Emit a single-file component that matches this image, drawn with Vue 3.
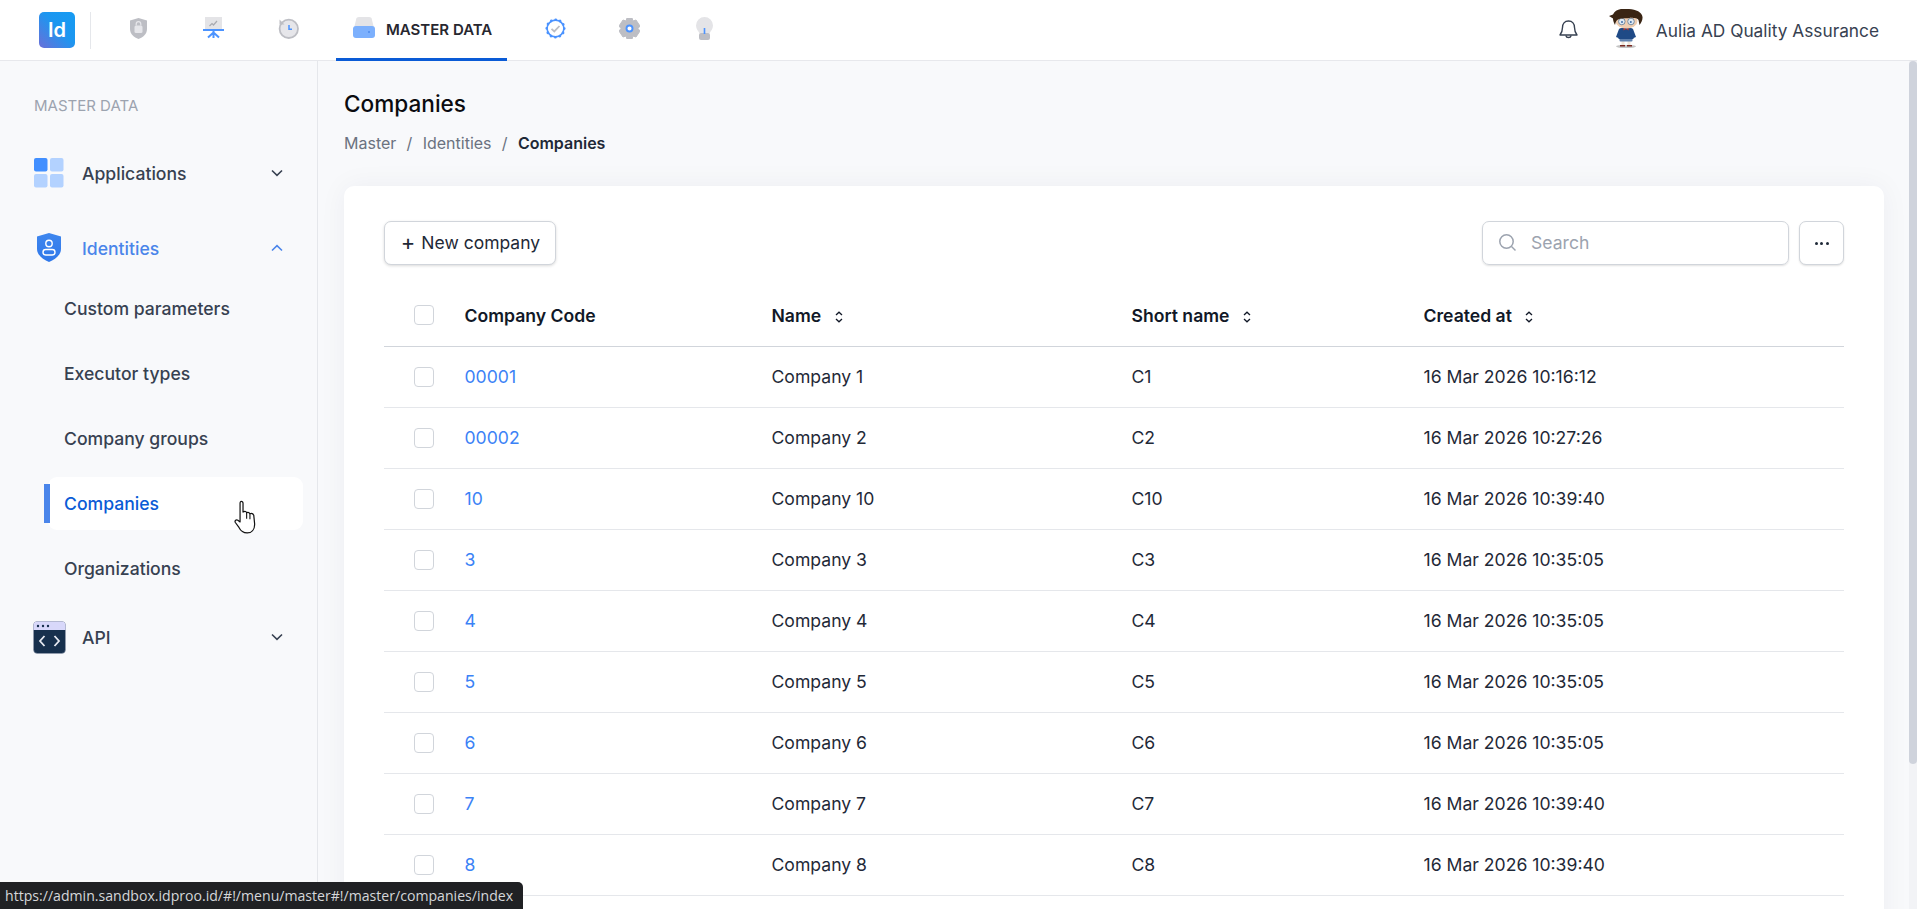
<template>
  <div class="page">
    <header class="topbar">
      <div class="logo">Id</div>
      <div class="logo-sep"></div>
      <nav class="tabs">
        <a class="tab tab-shield">
          <svg width="17" height="21" viewBox="0 0 17 21">
            <path d="M8.5 0 L17 2.5 V11 C17 16 13 19.5 8.5 21 C4 19.5 0 16 0 11 V2.5 Z" fill="#bdbec4" />
            <rect x="4.5" y="7.5" width="8" height="7.5" rx="1.5" fill="#e6e6ea" />
            <path d="M6.2 7.5 V6 a2.3 2.3 0 0 1 4.6 0 V7.5" fill="none" stroke="#e6e6ea" stroke-width="1.2" />
          </svg>
        </a>
        <a class="tab tab-board">
          <svg width="21" height="22" viewBox="0 0 21 22">
            <rect x="2" y="0" width="17" height="12" fill="#e4e4e7" />
            <path d="M6.5 9 L9 6.5 L10.5 8 L14 4" fill="none" stroke="#a9aab0" stroke-width="1.2" />
            <rect x="0" y="12" width="21" height="2" fill="#4b93ff" />
            <path d="M10.5 14 V21 M10.5 15.5 L5 20.5 M10.5 15.5 L16 20.5" fill="none" stroke="#4b93ff" stroke-width="2" />
          </svg>
        </a>
        <a class="tab tab-history">
          <svg width="21" height="21" viewBox="0 0 21 21">
            <circle cx="10.8" cy="10.8" r="9.2" fill="#e6e6ea" stroke="#bdbec4" stroke-width="1.8" />
            <path d="M1.5 1.5 V6.5 H6.5 Z" fill="#bdbec4" />
            <path d="M11 7 V11.3 H14" fill="none" stroke="#4b93ff" stroke-width="1.5" />
          </svg>
        </a>
        <a class="tab tab-active">
          <svg width="22" height="21" viewBox="0 0 22 21">
            <path d="M3 3 a3 3 0 0 1 3 -3 H16 a3 3 0 0 1 3 3 L21 11 H1 Z" fill="#e4e4e7" />
            <rect x="0" y="9" width="22" height="12" rx="3" fill="#7cb0fd" />
            <circle cx="16" cy="15" r="0.8" fill="#2b6fe0" />
          </svg>
          <span>MASTER DATA</span>
        </a>
        <a class="tab tab-verified">
          <svg width="21" height="21" viewBox="0 0 21 21">
            <circle cx="10.5" cy="10.5" r="8.4" fill="#fff" stroke="#4b93ff" stroke-width="1.6" />
            <circle cx="10.5" cy="10.5" r="8.8" fill="none" stroke="#4b93ff" stroke-width="2.6" stroke-linecap="round" stroke-dasharray="0.1 4.5" />
            <path d="M6.5 10.8 L9.3 13.4 L14.5 8" fill="none" stroke="#bdbec4" stroke-width="1.8" />
          </svg>
        </a>
        <a class="tab tab-gear">
          <svg width="21" height="21" viewBox="0 0 21 21">
            <path d="M8 0 H13 L14 3 L17 2 L21 8 L19 10.5 L21 13 L17 19 L14 18 L13 21 H8 L7 18 L4 19 L0 13 L2 10.5 L0 8 L4 2 L7 3 Z" fill="#bdbec4" stroke="#bdbec4" stroke-linejoin="round" />
            <circle cx="10.5" cy="10.5" r="3" fill="#fff" stroke="#4b93ff" stroke-width="1.9" />
          </svg>
        </a>
        <a class="tab tab-bulb">
          <svg width="17" height="23" viewBox="0 0 17 23">
            <path d="M8.5 0 a8.5 8.5 0 0 1 8.5 8.5 c0 3.5 -2.5 5.5 -3.5 8 H3.5 C2.5 14 0 12 0 8.5 A8.5 8.5 0 0 1 8.5 0 Z" fill="#e4e4e7" />
            <rect x="3" y="16" width="11" height="7" rx="2" fill="#bdbec4" />
            <rect x="7.7" y="11" width="1.6" height="6" fill="#4b93ff" />
          </svg>
        </a>
      </nav>
      <div class="user-area">
        <svg class="bell" width="19" height="21" viewBox="0 0 19 21" fill="none" stroke="#374151" stroke-width="1.4" stroke-linejoin="round">
          <path d="M9.5 1 C5.5 1 3.5 4 3.5 7.5 C3.5 11 2.5 13 1 15 H18 C16.5 13 15.5 11 15.5 7.5 C15.5 4 13.5 1 9.5 1 Z" />
          <path d="M6.8 15.5 a2.8 2.8 0 0 0 5.4 0" />
        </svg>
        <svg class="avatar" width="36" height="40" viewBox="0 0 36 40">
          <ellipse cx="17" cy="37.5" rx="10" ry="1.6" fill="#c4c4c4" />
          <rect x="12.5" y="31" width="3" height="5.5" fill="#efe6da" />
          <rect x="18.5" y="31" width="3" height="5.5" fill="#efe6da" />
          <rect x="11" y="36" width="5" height="1.5" fill="#7a2a22" />
          <rect x="18" y="36" width="5" height="1.5" fill="#7a2a22" />
          <rect x="10.5" y="27.5" width="13" height="5" rx="1" fill="#5f80ad" />
          <path d="M10 20 C12 18 22 18 24 20 L27 28 L24.5 29 V30 H9.5 V29 L7 28 Z" fill="#1f4a86" />
          <path d="M14.5 18.5 L17 20 L19.5 18.5 V21.5 L17 20 L14.5 21.5 Z" fill="#c0392b" />
          <ellipse cx="17.5" cy="12" rx="11" ry="7.5" fill="#efcdb0" />
          <circle cx="12.8" cy="12.5" r="3.3" fill="#dfe9f2" stroke="#5f7892" stroke-width="0.8" />
          <circle cx="22" cy="12.5" r="3.3" fill="#dfe9f2" stroke="#5f7892" stroke-width="0.8" />
          <circle cx="13" cy="13" r="1" fill="#3f6ea8" />
          <circle cx="21.8" cy="13" r="1" fill="#3f6ea8" />
          <path d="M0 7 L4 5.5 C6 0 14 -1 20 0 C27 0.5 33 3 33.5 8 C33.8 11 32 14 30.5 16 L29.5 11 C27 8 25 10 22 8.5 C18 10 12 8.5 9 10.5 C7.5 11 6.5 13 6 16 C4.5 13 4 11 4 9.5 Z" fill="#3a2514" />
        </svg>
        <span class="user-name">Aulia AD Quality Assurance</span>
      </div>
    </header>

    <div class="body-row">
      <aside class="sidebar">
        <div class="side-title">MASTER DATA</div>

        <div class="side-item side-first">
          <svg class="side-icon" width="30" height="30" viewBox="0 0 30 30">
            <rect x="0" y="0" width="13.5" height="13.5" rx="2" fill="#418fff" />
            <rect x="16" y="0" width="13.5" height="13.5" rx="2" fill="#b3d2ff" />
            <rect x="0" y="16" width="13.5" height="13.5" rx="2" fill="#b3d2ff" />
            <rect x="16" y="16" width="13.5" height="13.5" rx="2" fill="#b3d2ff" />
          </svg>
          <span class="side-label">Applications</span>
          <svg class="chev" width="14" height="8" viewBox="0 0 14 8" fill="none" stroke="#374151" stroke-width="1.6"><path d="M2 1.5 L7 6.3 L12 1.5" /></svg>
        </div>

        <div class="side-item side-open">
          <svg class="side-icon" width="30" height="30" viewBox="0 0 30 30">
            <defs>
              <linearGradient id="shieldFill" x1="0" y1="0" x2="0" y2="1">
                <stop offset="0" stop-color="#3e86ee" />
                <stop offset="1" stop-color="#2f78ea" />
              </linearGradient>
            </defs>
            <path d="M15 0 L27 3.5 V16 C27 22 21 26.5 15 29 C9 26.5 3 22 3 16 V3.5 Z" fill="url(#shieldFill)" />
            <circle cx="15" cy="10.5" r="3.2" fill="none" stroke="#fff" stroke-width="1.4" />
            <rect x="9" y="16.5" width="12" height="5.5" rx="2.7" fill="none" stroke="#fff" stroke-width="1.4" />
          </svg>
          <span class="side-label">Identities</span>
          <svg class="chev" width="14" height="8" viewBox="0 0 14 8" fill="none" stroke="#4a85ea" stroke-width="1.6"><path d="M2 6.5 L7 1.7 L12 6.5" /></svg>
        </div>

        <div class="sub-list">
          <div
            v-for="item in subItems"
            :key="item"
            class="sub-item"
            :class="{ active: item === 'Companies' }"
          >
            {{ item }}
          </div>
        </div>

        <div class="side-item side-api">
          <svg class="side-icon api-icon" width="33" height="33" viewBox="0 0 33 33">
            <rect x="0.5" y="0.5" width="32" height="32" rx="4" fill="#17304d" stroke="#9aa3b5" stroke-width="0.5" />
            <path d="M0.5 9 V4.5 a4 4 0 0 1 4 -4 H28.5 a4 4 0 0 1 4 4 V9 Z" fill="#d8d8fa" />
            <circle cx="5" cy="5" r="1.2" fill="#17304d" />
            <circle cx="10" cy="5" r="1.2" fill="#17304d" />
            <circle cx="15" cy="5" r="1.2" fill="#17304d" />
            <path d="M11.5 15 L7 20 L11.5 25 M21.5 15 L26 20 L21.5 25" fill="none" stroke="#e7eaf2" stroke-width="1.8" />
          </svg>
          <span class="side-label">API</span>
          <svg class="chev" width="14" height="8" viewBox="0 0 14 8" fill="none" stroke="#374151" stroke-width="1.6"><path d="M2 1.5 L7 6.3 L12 1.5" /></svg>
        </div>
      </aside>

      <main class="content">
        <h1 class="page-title">Companies</h1>
        <div class="crumbs">
          <span>Master</span><i>/</i><span>Identities</span><i>/</i><b>Companies</b>
        </div>

        <section class="card">
          <div class="toolbar">
            <button class="btn-new"><span class="plus">+</span> New company</button>
            <div class="search-box">
              <svg width="19" height="19" viewBox="0 0 19 19" fill="none" stroke="#9ca3af" stroke-width="1.5"><circle cx="8.5" cy="8.5" r="6.7" /><path d="M13.5 13.5 L17.5 17.5" /></svg>
              <span>Search</span>
            </div>
            <button class="btn-more" aria-label="More"><span></span><span></span><span></span></button>
          </div>

          <div class="table">
            <div class="tr th">
              <div class="td-check"><span class="check"></span></div>
              <div class="td-code">Company Code</div>
              <div class="td-name">Name <svg class="sort" width="8" height="12" viewBox="0 0 8 12" fill="none" stroke="#111827" stroke-width="1.3"><path d="M1 4 L4 1.2 L7 4 M1 8 L4 10.8 L7 8" /></svg></div>
              <div class="td-short">Short name <svg class="sort" width="8" height="12" viewBox="0 0 8 12" fill="none" stroke="#111827" stroke-width="1.3"><path d="M1 4 L4 1.2 L7 4 M1 8 L4 10.8 L7 8" /></svg></div>
              <div class="td-date">Created at <svg class="sort" width="8" height="12" viewBox="0 0 8 12" fill="none" stroke="#111827" stroke-width="1.3"><path d="M1 4 L4 1.2 L7 4 M1 8 L4 10.8 L7 8" /></svg></div>
            </div>
            <div v-for="row in rows" :key="row.code" class="tr">
              <div class="td-check"><span class="check"></span></div>
              <div class="td-code"><a>{{ row.code }}</a></div>
              <div class="td-name">{{ row.name }}</div>
              <div class="td-short">{{ row.short }}</div>
              <div class="td-date">{{ row.created }}</div>
            </div>
          </div>
        </section>
      </main>

      <div class="scroll-track"><div class="scroll-thumb"></div></div>
    </div>

    <!-- hover cursor -->
    <svg class="cursor" width="22" height="34" viewBox="0 0 20 31">
      <path d="M6 1.5 C7.3 1 8.2 1.8 8.2 3 V11 C10 10 11 10.5 11.5 11.5 C13 10.8 14 11.5 14.5 12.5 C16 12 17.5 12.8 18 14 L18.8 22 C18.8 27 16 30 12 30 C8 30 6 28 4.5 25 L1.2 20.5 C0.3 19 2 17.4 3.5 18.5 L5.5 20 V3 C5.5 2.2 5.5 1.8 6 1.5 Z" fill="#fff" stroke="#111" stroke-width="1.1" stroke-linejoin="round" />
      <path d="M11.5 11.5 V17 M14.5 12.5 V17.5" stroke="#111" stroke-width="1" />
    </svg>

    <div class="status-url">https://admin.sandbox.idproo.id/#!/menu/master#!/master/companies/index</div>
  </div>
</template>

<script setup>
const subItems = ['Custom parameters', 'Executor types', 'Company groups', 'Companies', 'Organizations']

const rows = [
  { code: '00001', name: 'Company 1', short: 'C1', created: '16 Mar 2026 10:16:12' },
  { code: '00002', name: 'Company 2', short: 'C2', created: '16 Mar 2026 10:27:26' },
  { code: '10', name: 'Company 10', short: 'C10', created: '16 Mar 2026 10:39:40' },
  { code: '3', name: 'Company 3', short: 'C3', created: '16 Mar 2026 10:35:05' },
  { code: '4', name: 'Company 4', short: 'C4', created: '16 Mar 2026 10:35:05' },
  { code: '5', name: 'Company 5', short: 'C5', created: '16 Mar 2026 10:35:05' },
  { code: '6', name: 'Company 6', short: 'C6', created: '16 Mar 2026 10:35:05' },
  { code: '7', name: 'Company 7', short: 'C7', created: '16 Mar 2026 10:39:40' },
  { code: '8', name: 'Company 8', short: 'C8', created: '16 Mar 2026 10:39:40' },
]
</script>

<style>
html, body {
  margin: 0;
  height: 100%;
  overflow: hidden;
}
</style>

<style scoped>
.page {
  position: relative;
  height: 909px;
  display: flex;
  flex-direction: column;
  overflow: hidden;
  font-family: Inter, "Liberation Sans", sans-serif;
  font-size: 17.6px;
  color: #1f2937;
  background: #f8f9fb;
}

.topbar {
  height: 60px;
  flex: none;
  display: flex;
  align-items: center;
  background: #fff;
  border-bottom: 1px solid #e7e8ec;
  padding-left: 39px;
}

.logo {
  width: 36px;
  height: 36px;
  border-radius: 5px;
  background: linear-gradient(45deg, #6a6fd8 0%, #1d96f0 55%, #159bf2 100%);
  color: #fff;
  font-size: 20px;
  font-weight: 600;
  display: flex;
  align-items: center;
  justify-content: center;
}

.logo-sep {
  width: 1px;
  height: 37px;
  background: #e5e7eb;
  margin-left: 15px;
}

.tabs {
  display: flex;
  height: 100%;
  align-items: stretch;
  margin-left: 39px;
}

.tab {
  display: flex;
  align-items: center;
  position: relative;
}

.tab svg {
  margin-top: -4px;
}

.tab-board { margin-left: 56px; }
.tab-history { margin-left: 54px; }

.tab-active {
  margin-left: 37px;
  padding: 0 15px 0 17px;
  gap: 11px;
  font-size: 15px;
  font-weight: 600;
  color: #27272f;
  height: 61px;
  box-sizing: border-box;
  border-bottom: 3px solid #0a5bd6;
}

.tab-verified { margin-left: 38px; }
.tab-gear { margin-left: 53px; }
.tab-bulb { margin-left: 56px; }

.user-area {
  margin-left: auto;
  display: flex;
  align-items: center;
  padding-right: 38px;
}

.bell { margin-right: 31px; }
.avatar { margin-right: 11px; margin-top: -2px; }

.user-name {
  font-size: 17.3px;
  color: #374151;
}

.body-row {
  flex: 1;
  min-height: 0;
  display: flex;
}

.sidebar {
  width: 318px;
  flex: none;
  box-sizing: border-box;
  border-right: 1px solid #e5e7eb;
  background: #f8f9fb;
  padding-top: 36px;
}

.side-title {
  font-size: 15px;
  line-height: 17px;
  color: #9ca3af;
  padding-left: 34px;
}

.side-item {
  display: flex;
  align-items: center;
  height: 60px;
  padding-left: 34px;
  position: relative;
  color: #374151;
}

.side-first { margin-top: 29px; }

.side-icon {
  flex: none;
  margin-right: 18px;
}

.api-icon { margin-left: -1px; margin-right: 16px; }

.side-label {
  flex: 1;
  font-weight: 500;
}

.side-open { color: #4a85ea; margin-top: 15px; }

.chev {
  margin-right: 33px;
}

.sub-list {
  margin-top: 4px;
  padding-left: 44px;
  padding-right: 14px;
}

.sub-item {
  height: 53px;
  margin-bottom: 12px;
  display: flex;
  align-items: center;
  padding-left: 20px;
  font-weight: 500;
  color: #374151;
  position: relative;
}

.sub-item.active {
  margin-left: 4px;
  padding-left: 16px;
  background: #fff;
  border-radius: 9px;
  color: #0a5bd6;
}

.sub-item.active::before {
  content: "";
  position: absolute;
  left: -4px;
  top: 7px;
  bottom: 7px;
  width: 6px;
  background: #4a85ea;
}

.side-api { margin-top: 2px; }

.content {
  flex: 1;
  min-width: 0;
  padding: 30px 25px 0 26px;
}

.page-title {
  margin: 0;
  font-size: 22.6px;
  line-height: 26px;
  font-weight: 500;
  color: #0b0b0f;
}

.crumbs {
  margin-top: 14px;
  font-size: 16px;
  line-height: 24px;
  color: #6b7280;
  display: flex;
}

.crumbs i {
  font-style: normal;
  margin: 0 10.3px;
}

.crumbs b {
  color: #1f2937;
  font-weight: 600;
}

.card {
  margin-top: 31px;
  background: #fff;
  border-radius: 10px;
  box-shadow: 0 0 28px rgba(30, 40, 70, 0.05);
  padding: 35px 40px 60px 39px;
}

.toolbar {
  display: flex;
  align-items: center;
}

.btn-new {
  height: 44px;
  width: 172px;
  margin-left: 1px;
  box-sizing: border-box;
  background: #fff;
  border: 1px solid #d1d5db;
  border-radius: 7px;
  box-shadow: 0 1px 3px rgba(0, 0, 0, 0.15);
  font: inherit;
  font-size: 17.5px;
  color: #1f2937;
  padding: 0 0 2px 1px;
}

.plus {
  font-size: 22px;
  line-height: 1;
  font-weight: 400;
  margin-right: 1px;
  vertical-align: -1px;
}

.search-box {
  margin-left: auto;
  width: 307px;
  height: 44px;
  box-sizing: border-box;
  border: 1px solid #d1d5db;
  border-radius: 7px;
  box-shadow: 0 1px 2px rgba(0, 0, 0, 0.12);
  display: flex;
  align-items: center;
  padding-left: 15px;
  padding-bottom: 1px;
  gap: 14px;
  color: #9ca3af;
}

.btn-more {
  margin-left: 10px;
  width: 45px;
  height: 44px;
  box-sizing: border-box;
  background: #fff;
  border: 1px solid #d1d5db;
  border-radius: 7px;
  box-shadow: 0 1px 2px rgba(0, 0, 0, 0.12);
  display: flex;
  align-items: center;
  justify-content: center;
  gap: 2.5px;
  padding: 0;
}

.btn-more span {
  width: 3px;
  height: 3px;
  border-radius: 50%;
  background: #1f2937;
}

.table {
  margin-top: 18px;
  margin-left: 1px;
}

.tr {
  display: grid;
  grid-template-columns: 80.5px 307px 360px 292px 1fr;
  align-items: center;
  height: 61px;
  padding-bottom: 1px;
  box-sizing: border-box;
  border-bottom: 1px solid #e5e7eb;
  color: #1f2937;
}

.th {
  height: 64px;
  padding-top: 1px;
  padding-bottom: 0;
  font-weight: 600;
  color: #111827;
  border-bottom-color: #d1d5db;
}

.td-check {
  padding-left: 30px;
  display: flex;
}

.check {
  width: 20px;
  height: 20px;
  box-sizing: border-box;
  border: 1px solid #d1d5db;
  border-radius: 4px;
  background: #fff;
}

.td-code a {
  color: #3b82f6;
}

.sort {
  margin-left: 9px;
  vertical-align: -1px;
}

.scroll-track {
  width: 8px;
  flex: none;
  background: #f2f3f6;
}

.scroll-thumb {
  height: 703px;
  background: #cfd3dc;
  border-radius: 4px;
}

.cursor {
  position: absolute;
  left: 234px;
  top: 500px;
  pointer-events: none;
}

.status-url {
  position: absolute;
  left: 0;
  bottom: 0;
  height: 27px;
  line-height: 27px;
  padding: 0 10px 0 5px;
  background: #202124;
  color: #d5d7da;
  border-radius: 0 5px 0 0;
  font-family: "Open Sans", "Noto Sans", sans-serif;
  font-size: 14.1px;
  white-space: nowrap;
}
</style>
